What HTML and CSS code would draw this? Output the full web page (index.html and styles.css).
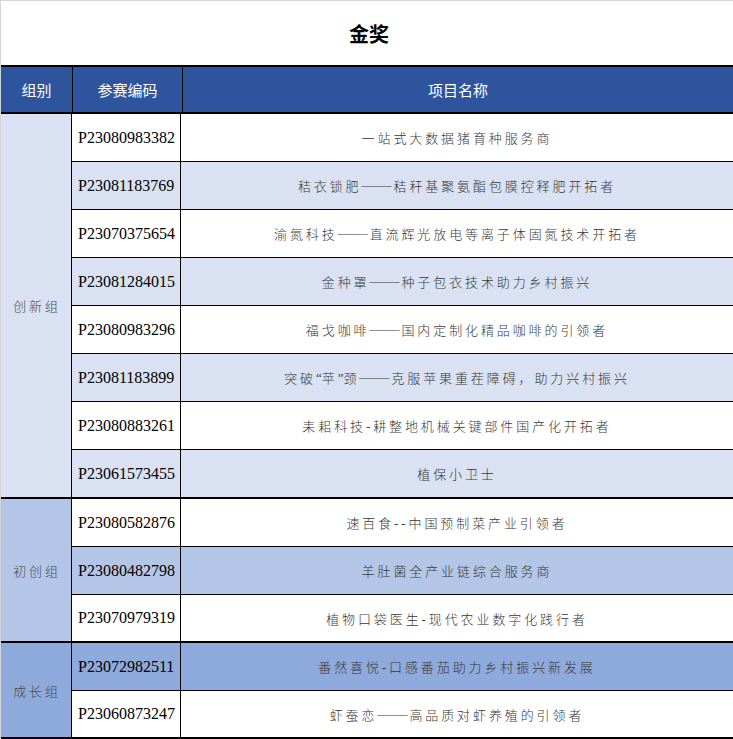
FILE: index.html
```html
<!DOCTYPE html>
<html lang="zh-CN">
<head>
<meta charset="utf-8">
<title>金奖</title>
<link rel="stylesheet" href="styles.css">
</head>
<body>
<div class="sheet">
  <div class="title">金奖</div>
  <div class="table">
    <div class="head">
      <div class="hc c-group">组别</div>
      <div class="hc c-code">参赛编码</div>
      <div class="hc c-name">项目名称</div>
    </div>

    <div class="group g1">
      <div class="glabel">创新组</div>
      <div class="rows">
        <div class="row"><div class="code">P23080983382</div><div class="name">一站式大数据猪育种服务商</div></div>
        <div class="row alt1"><div class="code">P23081183769</div><div class="name">秸衣锁肥<span class="dash">——</span>秸秆基聚氨酯包膜控释肥开拓者</div></div>
        <div class="row"><div class="code">P23070375654</div><div class="name">渝氮科技<span class="dash">——</span>直流辉光放电等离子体固氮技术开拓者</div></div>
        <div class="row alt1"><div class="code">P23081284015</div><div class="name">金种罩<span class="dash">——</span>种子包衣技术助力乡村振兴</div></div>
        <div class="row"><div class="code">P23080983296</div><div class="name">福戈咖啡<span class="dash">——</span>国内定制化精品咖啡的引领者</div></div>
        <div class="row alt1"><div class="code">P23081183899</div><div class="name">突破<span class="quote">“</span>苹<span class="quote">”</span>颈<span class="dash">——</span>克服苹果重茬障碍，助力兴村振兴</div></div>
        <div class="row"><div class="code">P23080883261</div><div class="name">耒耜科技-耕整地机械关键部件国产化开拓者</div></div>
        <div class="row alt1"><div class="code">P23061573455</div><div class="name">植保小卫士</div></div>
      </div>
    </div>

    <div class="group g2">
      <div class="glabel">初创组</div>
      <div class="rows">
        <div class="row"><div class="code">P23080582876</div><div class="name">速百食--中国预制菜产业引领者</div></div>
        <div class="row alt2"><div class="code">P23080482798</div><div class="name">羊肚菌全产业链综合服务商</div></div>
        <div class="row short"><div class="code">P23070979319</div><div class="name">植物口袋医生-现代农业数字化践行者</div></div>
      </div>
    </div>

    <div class="group g3">
      <div class="glabel">成长组</div>
      <div class="rows">
        <div class="row alt3"><div class="code">P23072982511</div><div class="name">番然喜悦-口感番茄助力乡村振兴新发展</div></div>
        <div class="row short"><div class="code">P23060873247</div><div class="name">虾蚕恋<span class="dash">——</span>高品质对虾养殖的引领者</div></div>
      </div>
    </div>
  </div>
</div>
</body>
</html>
```

FILE: styles.css
```css
html, body {
  margin: 0;
  padding: 0;
  background: #ffffff;
}

.sheet {
  border-top: 1px solid #d4d4d4;
  border-left: 1px solid #d4d4d4;
  font-family: "Noto Sans CJK SC", "Liberation Sans", sans-serif;
}

.title {
  height: 64px;
  display: flex;
  align-items: center;
  justify-content: center;
  font-size: 20px;
  font-weight: 700;
  color: #000;
  padding-left: 4px;
}

.table {
  border-top: 2px solid #000;
}

.head {
  display: flex;
  height: 45px;
  background: #2f549e;
  border-bottom: 2px solid #000;
  color: #ffffff;
  font-size: 15px;
}

.hc {
  display: flex;
  align-items: center;
  justify-content: center;
}

.c-group {
  width: 71px;
  border-right: 1px solid #000;
  flex: none;
}

.c-code {
  width: 109px;
  border-right: 1px solid #000;
  flex: none;
}

.c-name {
  flex: 1;
}

.group {
  display: flex;
  border-bottom: 2px solid #000;
}

.glabel {
  width: 71px;
  flex: none;
  border-right: 1px solid #000;
  display: flex;
  align-items: center;
  justify-content: center;
  font-size: 13px;
  font-weight: 300;
  letter-spacing: 2.8px;
  padding-left: 2px;
  box-sizing: border-box;
  color: #4a4a4a;
}

.g1 .glabel { background: #d9e1f2; }
.g2 .glabel { background: #b4c6e7; }
.g3 .glabel { background: #8ea9db; }

.rows {
  flex: 1;
  display: flex;
  flex-direction: column;
}

.row {
  display: flex;
  height: 47px;
  background: #ffffff;
}

.row + .row {
  border-top: 1px solid #000;
}

.row.short {
  height: 46px;
}

.row.alt1 { background: #d9e1f2; }
.row.alt2 { background: #b4c6e7; }
.row.alt3 { background: #8ea9db; }

.code {
  width: 109px;
  flex: none;
  border-right: 1px solid #000;
  box-sizing: border-box;
  padding-left: 6px;
  display: flex;
  align-items: center;
  font-family: "Liberation Serif", serif;
  font-size: 16px;
  color: #000;
}

.name {
  flex: 1;
  display: flex;
  align-items: center;
  justify-content: center;
  font-family: "Liberation Serif", "Noto Sans CJK SC", serif;
  font-size: 13px;
  font-weight: 300;
  letter-spacing: 2.9px;
  color: #383838;
}

.name .dash {
  font-size: 15px;
  letter-spacing: 0;
  margin-right: 2px;
}

.name .quote {
  letter-spacing: 0;
}
```
